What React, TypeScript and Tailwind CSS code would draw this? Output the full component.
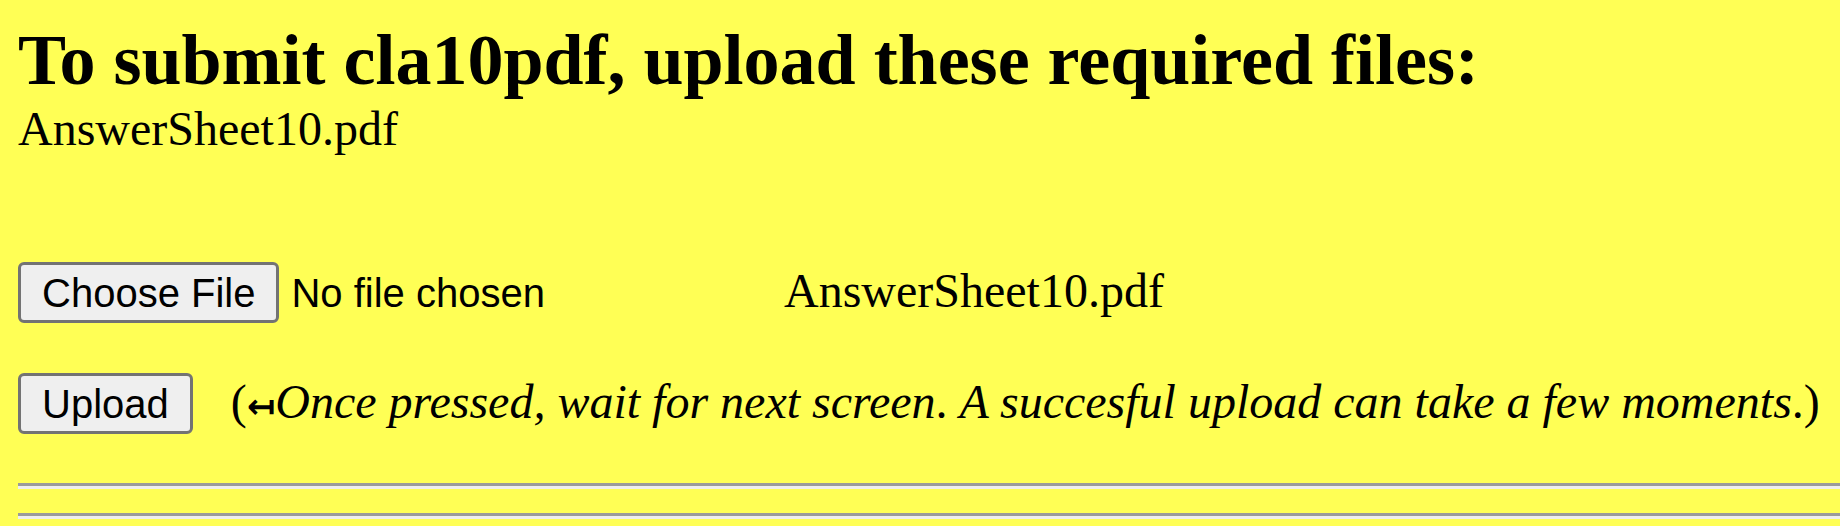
import React from 'react'

const serif = "font-['Liberation_Serif','Times_New_Roman',serif]"
const sans = "font-['Liberation_Sans',Arial,sans-serif]"

function NativeButton({ label }: { label: string }) {
  return (
    <button
      type="button"
      className={`${sans} h-[61px] rounded-[6px] border-[3px] border-[#737373] bg-[#efefef] px-[21px] text-[40px] leading-[44px] text-black`}
    >
      {label}
    </button>
  )
}

export default function App() {
  return (
    <div className={`${serif} min-h-screen bg-[#ffff55] pl-[18px] text-black`}>
      <h2 className="pt-[20px] text-[72px] font-bold leading-[81px]">
        To submit cla10pdf, upload these required files:
      </h2>
      <div className="text-[48px] leading-[55px]">AnswerSheet10.pdf</div>

      <div className="mt-[106px] flex items-baseline">
        <div className="flex w-[766px] items-baseline">
          <NativeButton label="Choose File" />
          <span className={`${sans} ml-[12px] text-[40px] leading-[44px]`}>No file chosen</span>
        </div>
        <span className="text-[48px] leading-[55px]">AnswerSheet10.pdf</span>
      </div>

      <div className="mt-[50px] flex items-baseline">
        <NativeButton label="Upload" />
        <span className="ml-[38px] text-[48px] leading-[55px]">
          (<span className="font-['DejaVu_Sans',sans-serif] text-[34px] font-bold">↤</span>
          <i>Once pressed, wait for next screen</i>. <i>A succesful upload can take a few moments</i>.)
        </span>
      </div>

      <hr className="mt-[49px] h-0 border-0 border-t-[3px] border-b-[3px] border-t-[#9a9a9a] border-b-[#eeeeee]" />
      <hr className="mt-[24px] h-0 border-0 border-t-[3px] border-b-[3px] border-t-[#9a9a9a] border-b-[#eeeeee]" />
    </div>
  )
}
